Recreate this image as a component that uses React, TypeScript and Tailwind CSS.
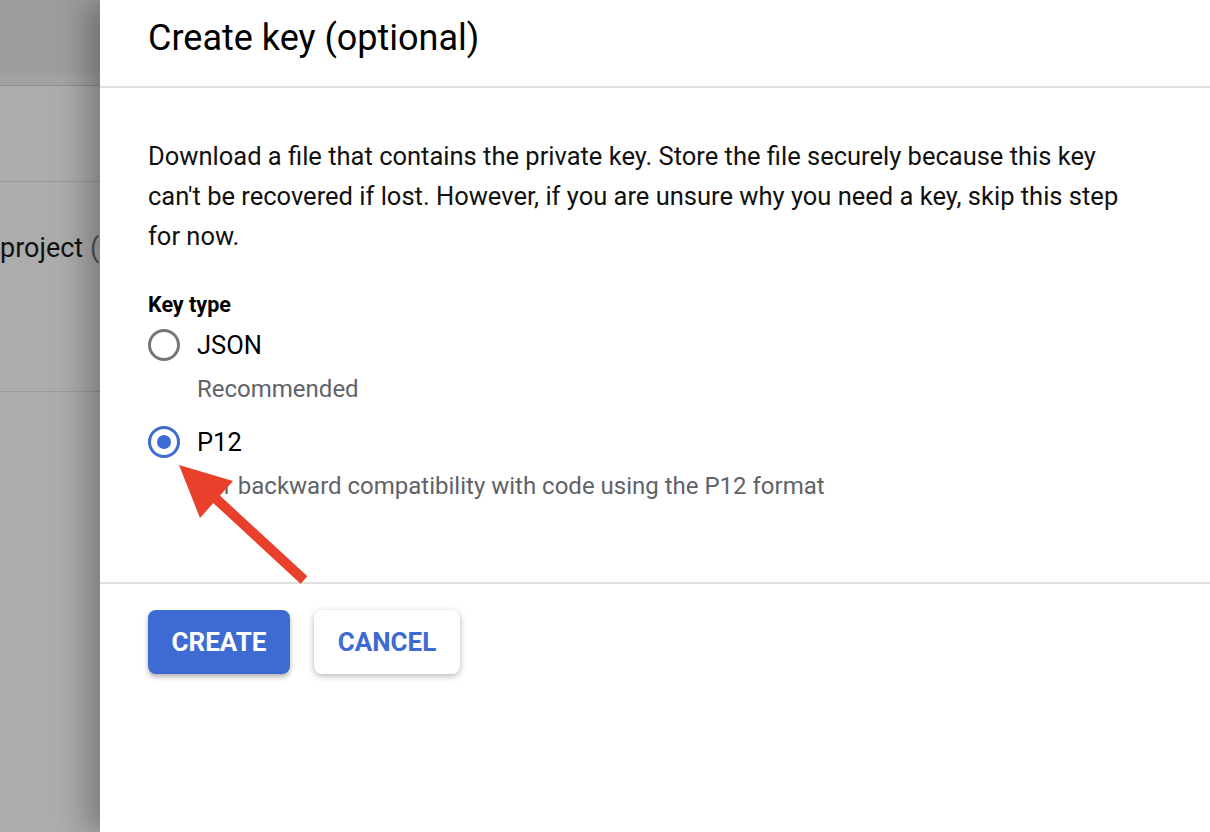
import React from 'react';

const font = { fontFamily: 'Roboto, "Liberation Sans", sans-serif' };

// Radio button circle, ring + optional dot
const Radio = ({ checked }: { checked: boolean }) => (
  <div
    className={
      checked
        ? 'size-[32px] rounded-full border-[3px] border-[#3d6bd1] flex items-center justify-center shrink-0'
        : 'size-[32px] rounded-full border-[3px] border-[#757575] shrink-0'
    }
  >
    {checked && <div className="size-[14px] rounded-full bg-[#3d6bd1]" />}
  </div>
);

const App = () => {
  return (
    <div className="relative flex w-[1210px] h-[832px] overflow-hidden bg-white text-black" style={font}>
      {/* page behind the dimmed overlay */}
      <div className="w-[100px] shrink-0 bg-[#acacac] overflow-hidden">
        <div className="h-[73px] bg-[#9d9d9d]" />
        <div className="h-[13px] bg-[#a3a3a3] border-b border-[#8e8e8e]" />
        <div className="h-[96px] border-b border-[#9a9a9a]" />
        <div className="h-[210px] border-b border-[#9a9a9a] pt-[48px]">
          <span className="block whitespace-nowrap text-[27px] leading-[36px] text-[#111]">
            project <span className="text-[#555]">(</span>
          </span>
        </div>
      </div>

      {/* side panel */}
      <div className="relative z-10 flex-1 flex flex-col bg-white shadow-[-14px_0_28px_rgba(0,0,0,0.28)]">
        <div className="h-[88px] border-b-2 border-[#e0e0e0] px-[48px] pt-[14px]">
          <h1 className="text-[36px] leading-[48px] font-normal">Create key (optional)</h1>
        </div>

        <div className="h-[496px] border-b-2 border-[#e0e0e0] px-[48px] pt-[48px]">
          <p className="max-w-[1000px] text-[25.5px] leading-[40px] text-[#111]">
            Download a file that contains the private key. Store the file securely because this key can't be recovered if lost. However, if you are unsure why you need a key, skip this step for now.
          </p>
          <div className="mt-[35px] text-[21.5px] leading-[28px] font-bold">Key type</div>

          <div className="mt-[6px] h-[40px] flex items-center gap-[17px]">
            <Radio checked={false} />
            <span className="text-[25.5px]">JSON</span>
          </div>
          <div className="mt-[9px] pl-[49px] text-[24px] leading-[30px] text-[#5f6368]">Recommended</div>

          <div className="mt-[18px] h-[40px] flex items-center gap-[17px]">
            <Radio checked={true} />
            <span className="text-[25.5px]">P12</span>
          </div>
          <div className="mt-[9px] pl-[49px] text-[24px] leading-[30px] text-[#5f6368]">
            For backward compatibility with code using the P12 format
          </div>
        </div>

        <div className="flex gap-[24px] px-[48px] pt-[26px]">
          <button className="h-[64px] w-[142px] rounded-[8px] bg-[#3d6bd1] text-white text-[26px] font-bold shadow-[0_3px_5px_rgba(0,0,0,0.3)]">
            CREATE
          </button>
          <button className="h-[64px] w-[146px] rounded-[8px] bg-white text-[#3d6bd1] text-[26px] font-bold shadow-[0_2px_6px_rgba(0,0,0,0.3)]">
            CANCEL
          </button>
        </div>
      </div>

      {/* annotation arrow */}
      <svg className="absolute left-0 top-0 z-20 pointer-events-none" width="1210" height="832" viewBox="0 0 1210 832">
        <line x1="213" y1="496" x2="304" y2="580" stroke="#e8402a" strokeWidth="10" />
        <polygon points="179,465 233,481 200,518" fill="#e8402a" />
      </svg>
    </div>
  );
};

export default App;
